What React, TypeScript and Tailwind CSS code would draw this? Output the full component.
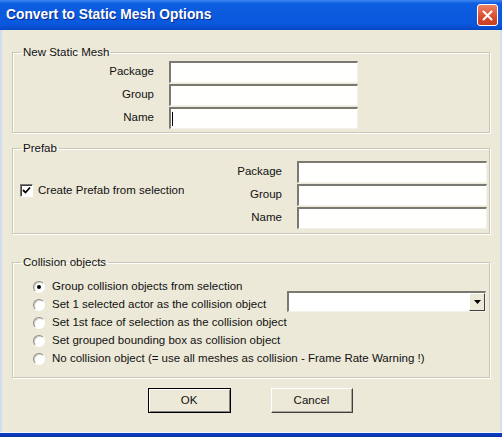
import React from "react";

function TextBox({ caret = false, width }: { caret?: boolean; width: string }) {
  return (
    <div
      className={`${width} h-[22px] bg-[#fffffd] border-t-2 border-l-2 border-t-[#7a7a72] border-l-[#7a7a72] border-b border-r border-b-[#f2f1ea] border-r-[#f2f1ea] flex items-center`}
    >
      {caret && <div className="ml-[1px] w-[1px] h-[14px] bg-black" />}
    </div>
  );
}

function Row({ label, labelW, caret = false, inputW }: { label: string; labelW: string; caret?: boolean; inputW: string }) {
  return (
    <div className="flex items-center gap-[15px]">
      <span className={`${labelW} text-right`}>{label}</span>
      <TextBox caret={caret} width={inputW} />
    </div>
  );
}

function Radio({ checked = false }: { checked?: boolean }) {
  return (
    <div className="w-[12px] h-[12px] rounded-full border border-t-[#8d8d86] border-l-[#8d8d86] border-b-[#ffffff] border-r-[#ffffff] bg-white flex items-center justify-center shadow-[inset_1px_1px_0_#d4d0c8]">
      {checked && <div className="w-[4px] h-[4px] rounded-full bg-black" />}
    </div>
  );
}

function Group({ title, className, children }: { title: string; className?: string; children: React.ReactNode }) {
  return (
    <fieldset className={`border border-[#cac7b5] shadow-[1px_1px_0_#ffffff,inset_1px_1px_0_#ffffff] ${className ?? ""}`}>
      <legend className="ml-[8px] px-[2px] leading-[14px]">{title}</legend>
      {children}
    </fieldset>
  );
}

export default function App() {
  const options = [
    "Group collision objects from selection",
    "Set 1 selected actor as the collision object",
    "Set 1st face of selection as the collision object",
    "Set grouped bounding box as collision object",
    "No collision object (= use all meshes as collision - Frame Rate Warning !)",
  ];

  return (
    <div className="w-[502px] h-[437px] flex flex-col text-[11.5px] text-[#111] font-['Liberation_Sans',Arial,sans-serif] overflow-hidden">
      {/* title bar */}
      <div className="h-[30px] flex items-center justify-between pl-[6px] pr-[4px] bg-[linear-gradient(to_bottom,#3d86f2_0%,#0d5de0_12%,#0a58dd_80%,#0747c6_100%)]">
        <span className="text-white font-bold text-[13.8px] [text-shadow:1px_1px_0_#0a2a8a]">Convert to Static Mesh Options</span>
        <div className="w-[21px] h-[22px] rounded-[3px] border border-white bg-[linear-gradient(to_bottom,#ec8465,#da4b2e_60%,#c83d22)] flex items-center justify-center">
          <svg width="11" height="11" viewBox="0 0 11 11">
            <path d="M1.5 1.5 L9.5 9.5 M9.5 1.5 L1.5 9.5" stroke="white" strokeWidth="2" strokeLinecap="round" />
          </svg>
        </div>
      </div>

      {/* body */}
      <div className="flex-1 flex flex-col bg-[#ECE9D8] border-l-2 border-r-2 border-l-[#cfdcf2] border-r-[#d6dff0] px-[10px] pt-[15px]">
        <Group title="New Static Mesh" className="pt-[2px] pb-[3px]">
          <div className="flex flex-col gap-[1px]">
            <Row label="Package" labelW="w-[141px]" inputW="w-[189px]" />
            <Row label="Group" labelW="w-[141px]" inputW="w-[189px]" />
            <Row label="Name" labelW="w-[141px]" inputW="w-[189px]" caret />
          </div>
        </Group>

        <Group title="Prefab" className="mt-[8px] pt-[6px] pb-[4px]">
          <div className="flex items-start">
            <div className="flex items-center gap-[5px] pl-[7px] mt-[21px]">
              <div className="w-[13px] h-[13px] bg-white border border-t-[#7a7a72] border-l-[#7a7a72] border-b-white border-r-white shadow-[inset_1px_1px_0_#404040] flex items-center justify-center">
                <svg width="9" height="9" viewBox="0 0 9 9">
                  <path d="M1 4 L3.5 6.5 L8 1.5" stroke="black" strokeWidth="1.8" fill="none" />
                </svg>
              </div>
              <span>Create Prefab from selection</span>
            </div>
            <div className="ml-auto pr-[2px] flex flex-col gap-[1px]">
              <Row label="Package" labelW="w-[60px]" inputW="w-[190px]" />
              <Row label="Group" labelW="w-[60px]" inputW="w-[190px]" />
              <Row label="Name" labelW="w-[60px]" inputW="w-[190px]" />
            </div>
          </div>
        </Group>

        <Group title="Collision objects" className="mt-[21px] pt-[9px] pb-[9px]">
          <div className="flex flex-col">
            {options.map((o, i) => (
              <div key={o} className="h-[18px] flex items-center pl-[20px]">
                <Radio checked={i === 0} />
                <span className="ml-[7px] whitespace-nowrap">{o}</span>
                {i === 1 && (
                  <div className="ml-auto mr-[3px] mb-[7px] w-[199px] h-[21px] bg-white border-t-2 border-l-2 border-t-[#7a7a72] border-l-[#7a7a72] border-b border-r border-b-[#f2f1ea] border-r-[#f2f1ea] flex justify-end">
                    <div className="w-[16px] h-full bg-[#ECE9D8] border border-t-white border-l-white border-b-[#404040] border-r-[#404040] flex items-center justify-center">
                      <svg width="7" height="4" viewBox="0 0 7 4">
                        <path d="M0 0 H7 L3.5 4 Z" fill="black" />
                      </svg>
                    </div>
                  </div>
                )}
              </div>
            ))}
          </div>
        </Group>

        <div className="mt-[10px] flex justify-center gap-[40px] pr-[2px]">
          <button className="w-[83px] h-[25px] border border-black bg-[#ECE9D8] shadow-[inset_1px_1px_0_#ffffff,inset_-1px_-1px_0_#808080]">
            OK
          </button>
          <button className="w-[82px] h-[25px] bg-[#ECE9D8] border border-t-white border-l-white border-b-[#404040] border-r-[#404040] shadow-[inset_-1px_-1px_0_#a9a79b]">
            Cancel
          </button>
        </div>
      </div>

      {/* bottom frame */}
      <div className="h-[5px] bg-[linear-gradient(to_bottom,#f4f7fc_0%,#f4f7fc_20%,#0b3fc4_20%,#0a34a8_100%)]" />
    </div>
  );
}
